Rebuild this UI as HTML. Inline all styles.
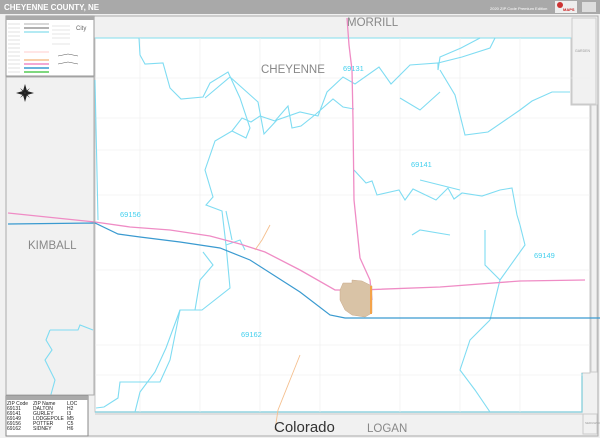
<!DOCTYPE html>
<html><head><style>
body{margin:0;width:600px;height:438px;overflow:hidden;font-family:"Liberation Sans",sans-serif;}
</style></head><body>
<svg width="600" height="438" viewBox="0 0 600 438" xmlns="http://www.w3.org/2000/svg" font-family="Liberation Sans, sans-serif">
<rect width="600" height="438" fill="#f1f1f1"/>
<rect width="600" height="14" fill="#a9a9a9"/>
<text x="4" y="10" font-size="8" font-weight="bold" fill="#fff">CHEYENNE COUNTY, NE</text>
<text x="490" y="10" font-size="4" fill="#fff">2020 ZIP Code Premium Edition</text>
<rect x="555" y="1" width="22" height="12" fill="#eee"/>
<circle cx="560" cy="5" r="3" fill="#c33"/>
<text x="563" y="11" font-size="4" fill="#c22" font-weight="bold">MAPS</text>
<rect x="582" y="2" width="14" height="10" fill="#ddd"/>
<rect x="6" y="16" width="592" height="420" fill="#f1f1f1" stroke="#aaa" stroke-width="1"/>
<polygon points="95,38 571,38 571,105 590,105 590,373 582,373 582,412 95,412" fill="#fff" stroke="#c8c8c8" stroke-width="1"/>
<polyline points="95,38 571,38" stroke="#9be3ef" stroke-width="1.2" fill="none"/>
<polyline points="582,373 582,412 95,412" stroke="#7ccbd9" stroke-width="1.2" fill="none"/>
<rect x="572" y="18" width="24" height="86" fill="#f1f1f1" stroke="#ccc"/>
<rect x="591" y="105" width="6" height="267" fill="#f1f1f1" stroke="#ccc"/>
<rect x="583" y="414" width="14" height="20" fill="#f1f1f1" stroke="#ccc"/>
<line x1="95" y1="414" x2="583" y2="414" stroke="#ccc"/>
<g stroke="#ececec" stroke-width="0.6">
<line x1="95" y1="78" x2="590" y2="78"/><line x1="95" y1="118" x2="590" y2="118"/><line x1="95" y1="150" x2="590" y2="150"/><line x1="95" y1="195" x2="590" y2="195"/><line x1="95" y1="270" x2="590" y2="270"/><line x1="95" y1="345" x2="590" y2="345"/><line x1="95" y1="375" x2="590" y2="375"/>
<line x1="140" y1="38" x2="140" y2="412"/><line x1="200" y1="38" x2="200" y2="412"/><line x1="260" y1="38" x2="260" y2="412"/><line x1="320" y1="38" x2="320" y2="412"/><line x1="400" y1="38" x2="400" y2="412"/><line x1="460" y1="38" x2="460" y2="412"/><line x1="520" y1="38" x2="520" y2="412"/>
</g>
<g stroke="#7fdcf2" stroke-width="1.1" fill="none">
<polyline points="139,38 140,55 145,64 163,63 170,88 181,99 203,97 210,83 228,72 240,98 250,128 246,138 232,131 215,141 205,170 213,197 206,205 222,211 226,245 230,288 202,310 180,310 170,360 160,382 120,382 118,398 104,407 96,408"/>
<polyline points="205,98 230,77 258,102 264,134 277,120 300,112 318,116 327,92 343,77 355,84 379,67 391,84 410,65 438,63 438,70 440,57 461,48 480,38"/>
<polyline points="438,63 462,57 490,48 495,38"/>
<polyline points="440,70 455,95 465,135 488,132 520,110 532,101 552,92 570,92"/>
<polyline points="232,131 242,118 251,122 260,116 275,121 288,106 292,128 301,126 316,114 333,99 343,107 354,109"/>
<polyline points="354,170 366,183 372,181 377,195 399,190 405,200 413,189 436,200 448,188 454,199 462,193 482,196 500,190 512,188 517,215 520,225 525,245 500,280 490,320"/>
<polyline points="420,180 440,185 460,190"/>
<polyline points="203,252 213,265 200,280 195,310"/>
<polyline points="50,330 78,330 80,325 93,330"/>
<polyline points="50,330 46,340 52,350 45,360 55,380 50,398"/>
<polyline points="180,310 166,348 155,372 140,392 135,412"/>
<polyline points="226,245 240,240 245,250"/>
<polyline points="95,80 98,220"/>
<polyline points="226,211 232,240"/>
<polyline points="450,235 420,230 412,235"/>
<polyline points="485,230 485,265 500,280"/>
<polyline points="490,320 470,340 460,370 475,390 490,412"/>
<polyline points="400,98 420,110 440,92"/>
</g>
<polyline points="8,213 95,222 130,227 170,230 210,236 240,244 265,252 300,270 335,290 360,290 440,287 520,281 585,280" stroke="#ef8cc5" stroke-width="1.3" fill="none"/>
<polyline points="347,18 349,45 352,70 353,120 354,200 360,258 370,280 372,300" stroke="#ef8cc5" stroke-width="1.3" fill="none"/>
<polyline points="8,224 95,223 118,234 140,237 180,242 220,248 250,260 300,292 330,315 345,318 600,318" stroke="#3a9ad0" stroke-width="1.2" fill="none"/>
<polyline points="270,225 262,240 255,250" stroke="#f5c08f" stroke-width="0.9" fill="none"/>
<polyline points="300,355 290,380 278,410 275,430" stroke="#f5c08f" stroke-width="0.9" fill="none"/>
<polygon points="343,283 352,283 352,280 362,281 372,286 372,313 365,317 352,315 345,310 340,300 340,290" fill="#d9c3a6" stroke="#c9a98a" stroke-width="0.5"/>
<rect x="370" y="286" width="2" height="28" fill="#f4a34a"/>
<g fill="#44d0ee" font-size="7.5">
<text x="343" y="71">69131</text><text x="411" y="167">69141</text><text x="120" y="217">69156</text><text x="534" y="258">69149</text><text x="241" y="337">69162</text>
</g>
<g fill="#888" font-size="11.5">
<text x="261" y="73">CHEYENNE</text><text x="347" y="26">MORRILL</text><text x="28" y="249">KIMBALL</text><text x="367" y="432">LOGAN</text>
</g>
<text x="274" y="432" font-size="15" fill="#333">Colorado</text>
<text x="575" y="52" font-size="3.5" fill="#999">GARDEN</text>
<text x="585" y="424" font-size="3" fill="#999">SEDGWICK</text>
<rect x="6" y="16" width="88" height="60" fill="#fff" stroke="#999"/>
<rect x="6" y="16" width="88" height="4" fill="#aaa"/>
<g stroke-width="1.5">
<line x1="24" y1="24" x2="49" y2="24" stroke="#ccc"/><line x1="24" y1="28" x2="49" y2="28" stroke="#999"/><line x1="24" y1="32" x2="49" y2="32" stroke="#9be3ef"/>
<line x1="24" y1="52" x2="49" y2="52" stroke="#fdd"/><line x1="24" y1="60" x2="49" y2="60" stroke="#f5c08f"/><line x1="24" y1="64" x2="49" y2="64" stroke="#ef8cc5"/><line x1="24" y1="68" x2="49" y2="68" stroke="#3a9ad0"/><line x1="24" y1="72" x2="49" y2="72" stroke="#5c5"/>
</g>
<g stroke="#ccc" stroke-width="0.6"><line x1="8" y1="24" x2="20" y2="24"/><line x1="8" y1="28" x2="20" y2="28"/><line x1="8" y1="32" x2="20" y2="32"/><line x1="8" y1="36" x2="20" y2="36"/><line x1="8" y1="40" x2="20" y2="40"/><line x1="8" y1="44" x2="20" y2="44"/><line x1="8" y1="48" x2="20" y2="48"/><line x1="8" y1="52" x2="20" y2="52"/><line x1="8" y1="56" x2="20" y2="56"/><line x1="8" y1="60" x2="20" y2="60"/><line x1="8" y1="64" x2="20" y2="64"/><line x1="8" y1="68" x2="20" y2="68"/><line x1="8" y1="72" x2="20" y2="72"/>
<line x1="52" y1="26" x2="70" y2="26"/><line x1="52" y1="30" x2="70" y2="30"/><line x1="52" y1="34" x2="70" y2="34"/><line x1="52" y1="38" x2="70" y2="38"/><line x1="52" y1="44" x2="70" y2="44"/></g>
<polyline points="58,56 68,54 78,56" stroke="#555" stroke-width="0.5" fill="none"/>
<polyline points="58,64 68,62 78,64" stroke="#555" stroke-width="0.5" fill="none"/>
<text x="76" y="30" font-size="6" fill="#666">City</text>
<rect x="6" y="77" width="88" height="318" fill="none" stroke="#aaa"/>
<g transform="translate(25,93)" fill="#222">
<polygon points="0,-9 2,-2 0,0 -2,-2"/><polygon points="0,9 2,2 0,0 -2,2"/><polygon points="-9,0 -2,2 0,0 -2,-2"/><polygon points="9,0 2,2 0,0 2,-2"/>
<polygon points="-5,-5 0,-1 -1,0"/><polygon points="5,5 0,1 1,0"/><polygon points="5,-5 1,0 0,-1"/><polygon points="-5,5 -1,0 0,1"/>
</g>
<rect x="6" y="396" width="82" height="40" fill="#fff" stroke="#888"/>
<rect x="6" y="396" width="82" height="4" fill="#aaa"/>
<g font-size="5" fill="#222">
<text x="7" y="405">ZIP Code</text><text x="33" y="405">ZIP Name</text><text x="67" y="405">LOC</text>
<text x="7" y="410">69131</text><text x="33" y="410">DALTON</text><text x="67" y="410">H2</text>
<text x="7" y="415">69141</text><text x="33" y="415">GURLEY</text><text x="67" y="415">I3</text>
<text x="7" y="420">69149</text><text x="33" y="420">LODGEPOLE</text><text x="67" y="420">M5</text>
<text x="7" y="425">69156</text><text x="33" y="425">POTTER</text><text x="67" y="425">C5</text>
<text x="7" y="430">69162</text><text x="33" y="430">SIDNEY</text><text x="67" y="430">H6</text>
</g>
</svg>
</body></html>
